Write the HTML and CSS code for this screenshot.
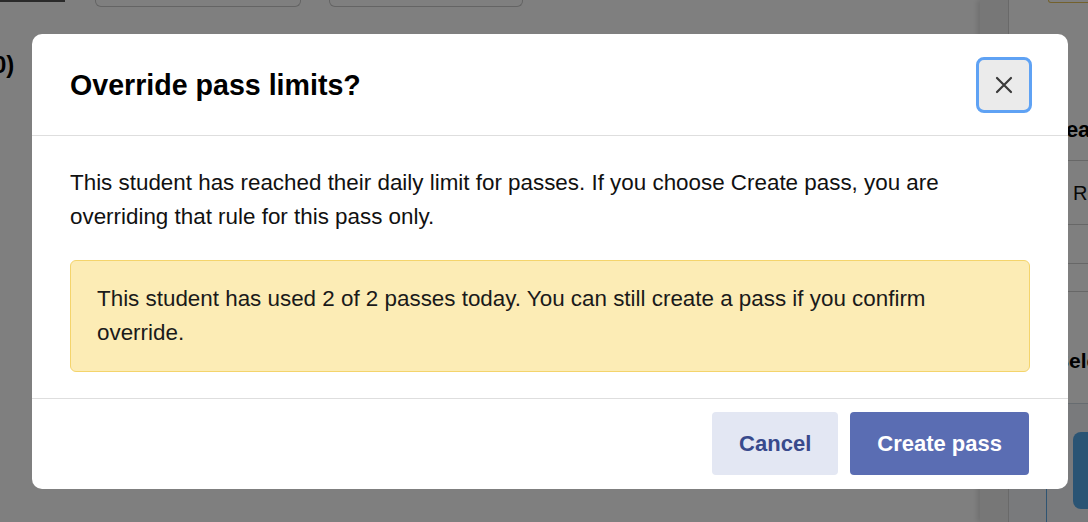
FILE: index.html
```html
<!DOCTYPE html>
<html lang="en">
    <head>
        <title>Override pass limits</title>
        <link rel="stylesheet" href="styles.css">
    </head>
    <body>
        <div class="page">
            <main class="content">
                <div class="toolbar">
                    <span class="tab-strip"></span>
                    <div class="filter filter-wide"></div>
                    <div class="filter"></div>
                </div>
                <h2 class="count">(0)</h2>
            </main>

            <aside class="sidebar">
                <div class="drawer">
                    <div class="drawer-card"></div>
                    <h3 class="drawer-title">Reason</h3>
                    <ul class="drawer-list">
                        <li class="row-tall">Restroom</li>
                        <li class="row-mid"></li>
                        <li class="row-short"></li>
                    </ul>
                    <h3 class="drawer-title drawer-select">Select</h3>
                    <div class="drawer-action">
                        <div class="action-inner">
                            <button class="action-button">Go</button>
                        </div>
                    </div>
                </div>
            </aside>
        </div>

        <!-- modal sits over the page -->
        <div class="overlay">
            <div class="modal" role="dialog">
                <div class="modal-header">
                    <h1 class="modal-title">Override pass limits?</h1>
                    <button class="close" aria-label="Close">
                        <svg width="18" height="18" viewBox="0 0 18 18">
                            <path d="M2 2 L16 16 M16 2 L2 16" stroke="#3a3a3a" stroke-width="2.2" stroke-linecap="round" fill="none"/>
                        </svg>
                    </button>
                </div>

                <div class="modal-body">
                    <p class="message">This student has reached their daily limit for passes. If you choose Create pass, you are overriding that rule for this pass only.</p>
                    <div class="alert">This student has used 2 of 2 passes today. You can still create a pass if you confirm override.</div>
                </div>

                <div class="modal-footer">
                    <button class="btn btn-cancel">Cancel</button>
                    <button class="btn btn-primary">Create pass</button>
                </div>
            </div>
        </div>
    </body>
</html>
```

FILE: styles.css
```css
body{
    margin: 0;
    font-family: "Liberation Sans", Arial, sans-serif;
    color: #111;
    background-color: white;
    overflow: hidden;
}

.page{
    display: flex;
    height: 522px;
}

.content{
    flex: 1;
}
.toolbar{
    display: flex;
    align-items: flex-start;
    height: 40px;
}
.tab-strip{
    width: 65px;
    height: 2px;
    background-color: #555;
}
.filter{
    width: 192px;
    height: 6px;
    border: 1px solid #c8c8c8;
    border-top: none;
    border-radius: 0 0 6px 6px;
    margin-left: 28px;
}
.filter-wide{
    width: 204px;
    margin-left: 30px;
}
.count{
    margin: 10px 0 0 -15px;
    font-size: 24px;
    line-height: 30px;
    color: #000;
}

.sidebar{
    width: 108px;
    flex-shrink: 0;
    background-color: #eeeeee;
    box-shadow: -3px 0 5px rgba(0,0,0,0.12);
    padding-left: 28px;
    box-sizing: border-box;
    overflow: hidden;
}
.drawer{
    height: 100%;
    background-color: white;
    border-left: 1px solid #d2d2d2;
    width: 120px;
}
.drawer-card{
    margin-left: 39px;
    height: 2px;
    border: 1px solid #e6c25a;
    border-top: none;
    border-radius: 0 0 0 6px;
}
.drawer-title{
    margin: 112px 0 0 41px;
    font-size: 22px;
    line-height: 30px;
    color: #000;
    white-space: nowrap;
}
.drawer-select{
    margin-top: 54px;
    margin-left: 46px;
    font-size: 21px;
}
.drawer-list{
    list-style: none;
    margin: 15px 0 0 0;
    padding: 0;
    border-top: 1px solid #cfcfcf;
}
.drawer-list li{
    border-bottom: 1px solid #cfcfcf;
    padding-left: 64px;
    font-size: 20px;
    white-space: nowrap;
    box-sizing: border-box;
}
.row-tall{
    height: 64px;
    line-height: 64px;
}
.row-mid{
    height: 39px;
}
.row-short{
    height: 28px;
}
.drawer-action{
    margin-top: 27px;
    border-top: 1px solid #cfd8e0;
    background-color: #f2f5f8;
    height: 200px;
    padding-left: 37px;
}
.action-inner{
    border-left: 1px solid #5fa8e4;
    height: 100%;
    padding: 28px 0 0 26px;
}
.action-button{
    width: 90px;
    height: 77px;
    border: none;
    border-radius: 8px;
    background-color: #54a8e8;
    color: white;
}

/* modal */
.overlay{
    position: fixed;
    top: 0;
    left: 0;
    right: 0;
    bottom: 0;
    background-color: rgba(0,0,0,0.5);
    padding: 34px 0 0 32px;
}
.modal{
    width: 1036px;
    background-color: white;
    border-radius: 10px;
}
.modal-header{
    display: flex;
    align-items: center;
    justify-content: space-between;
    padding: 23px 36px 22px 38px;
    border-bottom: 1px solid #dedede;
}
.modal-title{
    margin: 0;
    font-size: 28.6px;
    line-height: 34px;
    color: #000;
}
.close{
    width: 56px;
    height: 56px;
    border: 3px solid #5fa2f4;
    border-radius: 8px;
    background-color: #ebebeb;
    display: flex;
    align-items: center;
    justify-content: center;
    padding: 0;
}
.modal-body{
    padding: 30px 38px 26px 38px;
}
.message{
    margin: 0 0 26px 0;
    font-size: 22.4px;
    line-height: 34px;
}
.alert{
    background-color: #fcecb5;
    border: 1px solid #f4d46c;
    border-radius: 6px;
    padding: 21px 26px 21px 26px;
    font-size: 22.4px;
    line-height: 34px;
    color: #1a1a1a;
}
.modal-footer{
    display: flex;
    justify-content: flex-end;
    gap: 12px;
    padding: 13px 39px 14px 38px;
    border-top: 1px solid #dedede;
}
.btn{
    height: 63px;
    padding: 0 27px;
    border: none;
    border-radius: 4px;
    font-family: "Liberation Sans", Arial, sans-serif;
    font-size: 22px;
    font-weight: bold;
}
.btn-cancel{
    background-color: #e3e7f3;
    color: #384a8c;
}
.btn-primary{
    background-color: #5a6db3;
    color: white;
}
```
